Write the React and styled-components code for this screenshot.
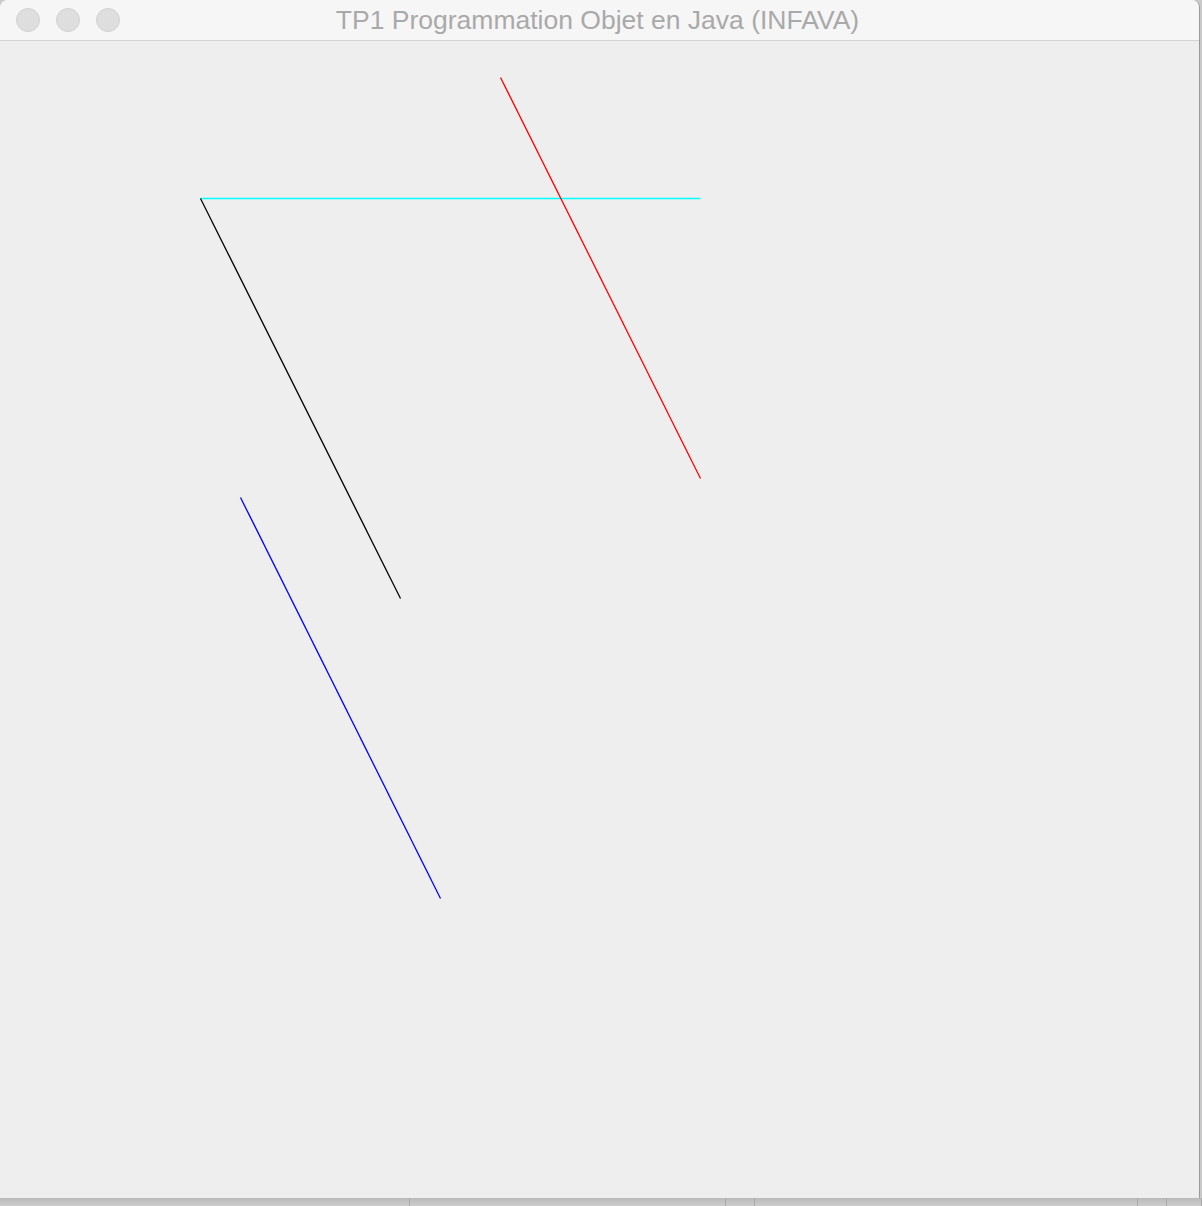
import React from "react"
import styled, { createGlobalStyle } from "styled-components"

const GlobalStyle = createGlobalStyle`
  html, body {
    margin: 0;
    padding: 0;
    background: #c9c9c9;
    font-family: "Liberation Sans", Arial, sans-serif;
  }
`

const Screen = styled.div`
  width: 1202px;
  height: 1206px;
  display: flex;
  flex-direction: column;
  overflow: hidden;
  background: #c9c9c9;
`

const Window = styled.div`
  width: 1200px;
  height: 1198px;
  display: flex;
  flex-direction: column;
  background: #eeeeee;
  border-right: 1px solid #9a9a9a;
  border-radius: 8px 8px 0 0;
  box-shadow: 0 1px 0 #8f8f8f;
  overflow: hidden;
  box-sizing: border-box;
`

const TitleBar = styled.div`
  height: 40px;
  flex: none;
  position: relative;
  display: flex;
  align-items: center;
  justify-content: center;
  background: #f6f6f6;
  border-bottom: 1px solid #d3d3d3;
`

const Lights = styled.div`
  position: absolute;
  left: 16px;
  top: 8px;
  display: flex;
  gap: 16px;
`

const Light = styled.span`
  width: 24px;
  height: 24px;
  border-radius: 50%;
  background: #dedede;
  border: 1px solid #d1d1d1;
  box-sizing: border-box;
`

const Title = styled.div`
  font-size: 26.5px;
  color: #a9a9a9;
  margin-left: -4px;
  margin-top: 1px;
`

const Canvas = styled.svg`
  display: block;
  flex: 1;
  width: 100%;
`

const Dock = styled.div`
  flex: 1;
  display: flex;
  background: linear-gradient(#b9b9b9, #cdcdcd);
`

const DockPart = styled.div`
  width: ${p => p.w}px;
  flex: ${p => (p.w ? "none" : 1)};
  border-right: 1px solid #a9a9a9;
`

const lines = [
  { x1: 200, y1: 198, x2: 700, y2: 198, c: "#00ffff" },
  { x1: 200, y1: 198, x2: 400, y2: 598, c: "#000000" },
  { x1: 500, y1: 77, x2: 700, y2: 478, c: "#ff0000" },
  { x1: 240, y1: 497, x2: 440, y2: 898, c: "#0000ff" },
]

export default function App() {
  return (
    <>
      <GlobalStyle />
      <Screen>
        <Window>
          <TitleBar>
            <Lights>
              <Light />
              <Light />
              <Light />
            </Lights>
            <Title>TP1 Programmation Objet en Java (INFAVA)</Title>
          </TitleBar>
          <Canvas viewBox="0 41 1199 1157" preserveAspectRatio="xMinYMin">
            {lines.map((l, i) => (
              <line
                key={i}
                x1={l.x1 + 0.5}
                y1={l.y1 + 0.5}
                x2={l.x2 + 0.5}
                y2={l.y2 + 0.5}
                stroke={l.c}
                strokeWidth="1.3"
              />
            ))}
          </Canvas>
        </Window>
        <Dock>
          <DockPart w={409} />
          <DockPart w={315} />
          <DockPart w={28} />
          <DockPart w={382} />
          <DockPart w={28} />
          <DockPart />
        </Dock>
      </Screen>
    </>
  )
}
